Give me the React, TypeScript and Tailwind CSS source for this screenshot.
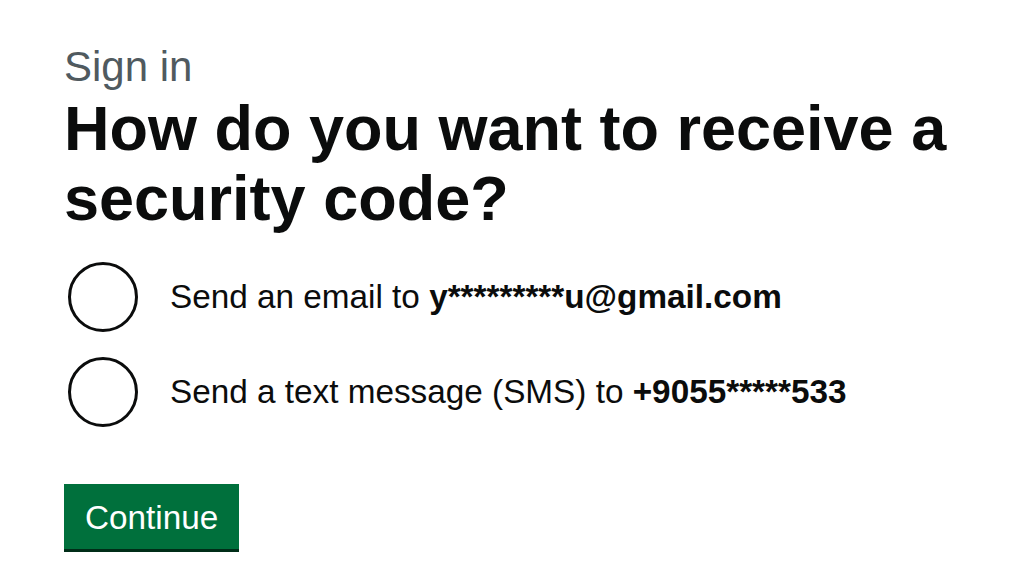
export default function App() {
  const options = [
    { id: 'email', label: 'Send an email to ', value: 'y*********u@gmail.com' },
    { id: 'sms', label: 'Send a text message (SMS) to ', value: '+9055*****533' },
  ]

  return (
    <div className="min-h-screen bg-white text-[#0b0c0c]" style={{ fontFamily: '"Liberation Sans", Arial, sans-serif' }}>
      <main className="pl-[64px] pt-[41px]">
        <span className="block text-[42px] leading-[52px] text-[#505a5f]">Sign in</span>
        <h1 className="text-[63px] leading-[70px] font-bold mb-[29px]">
          How do you want to receive a<br />security code?
        </h1>

        <div className="flex flex-col gap-[25px]">
          {options.map(o => (
            <label key={o.id} className="flex items-center">
              <span className="ml-[4px] w-[70px] h-[70px] rounded-full border-[3px] border-[#0b0c0c] shrink-0" />
              <span className="ml-[32px] text-[33.3px] leading-[40px]">
                {o.label}
                <b>{o.value}</b>
              </span>
            </label>
          ))}
        </div>

        <button className="mt-[57px] bg-[#00703c] text-white text-[33.3px] leading-[39px] px-[21px] pt-[14px] pb-[12px] shadow-[0_3px_0_#002d18]">
          Continue
        </button>
      </main>
    </div>
  )
}
